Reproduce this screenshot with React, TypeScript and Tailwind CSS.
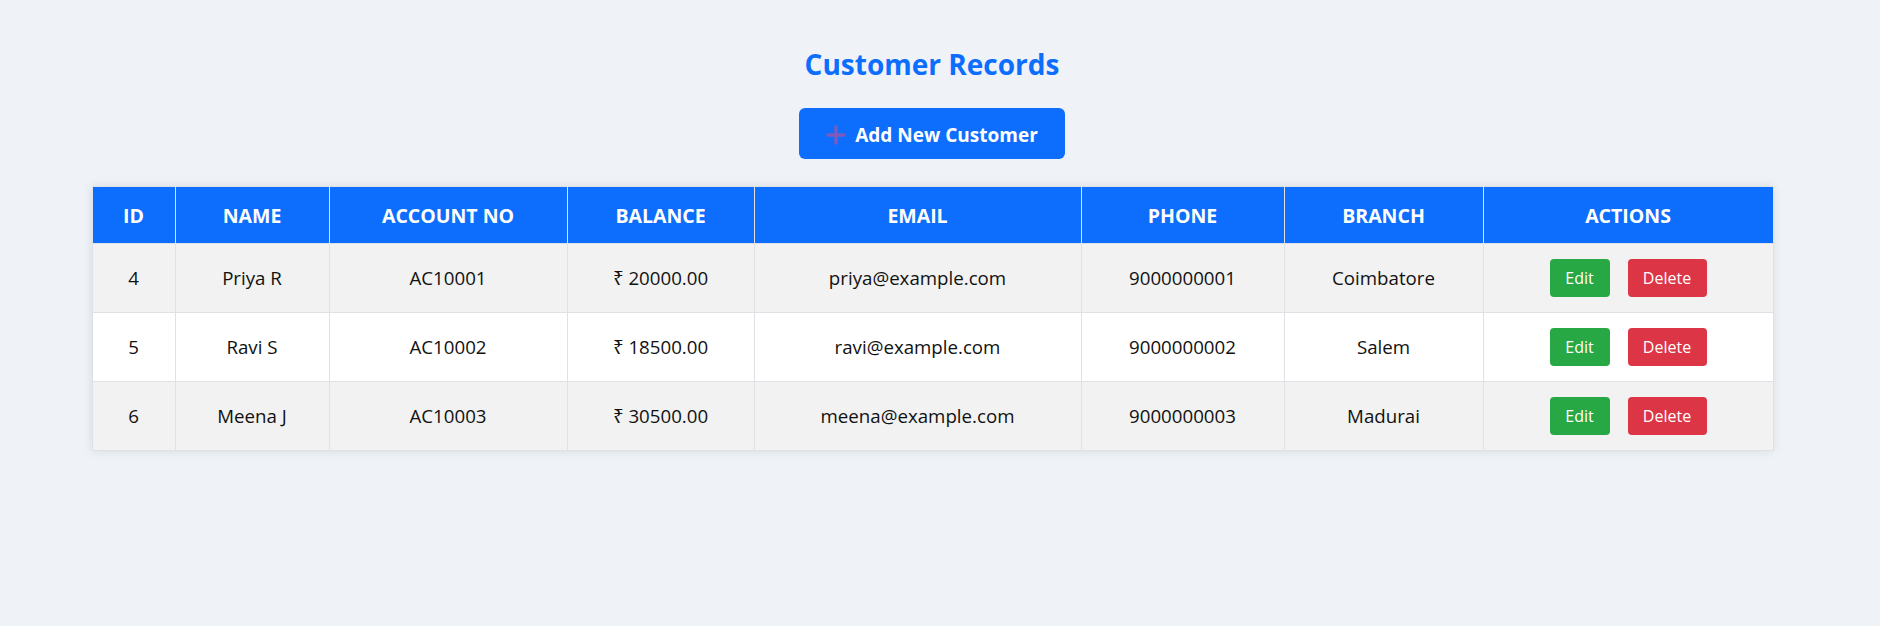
import React from "react";

const rows = [
  { id: 4, name: "Priya R", acc: "AC10001", bal: "₹ 20000.00", email: "priya@example.com", phone: "9000000001", branch: "Coimbatore" },
  { id: 5, name: "Ravi S", acc: "AC10002", bal: "₹ 18500.00", email: "ravi@example.com", phone: "9000000002", branch: "Salem" },
  { id: 6, name: "Meena J", acc: "AC10003", bal: "₹ 30500.00", email: "meena@example.com", phone: "9000000003", branch: "Madurai" },
];

const headers = ["ID", "NAME", "ACCOUNT NO", "BALANCE", "EMAIL", "PHONE", "BRANCH", "ACTIONS"];
const widths = ["w-[83px]", "w-[154px]", "w-[238px]", "w-[187px]", "w-[327px]", "w-[203px]", "w-[199px]", "w-[290px]"];

export default function App() {
  return (
    <div
      className="min-h-[626px] w-full bg-[#eff2f7] text-[#111]"
      style={{ fontFamily: '"Open Sans", "Noto Sans", sans-serif' }}
    >
      <div className="w-[1864px] flex flex-col items-center pt-[47px]">
        <h2 className="text-[28px] leading-[34px] font-bold text-[#0d6efd]">Customer Records</h2>
        <button className="mt-[27px] w-[266px] h-[51px] pt-[4px] rounded-[6px] bg-[#0d6efd] text-white text-[19px] font-bold flex items-center justify-center gap-[9px]">
          <svg width="20" height="20" viewBox="0 0 20 20" className="shrink-0 -mt-[2px]">
            <line x1="10" y1="2" x2="10" y2="18" stroke="#7d5bbd" strokeWidth="3.4" strokeLinecap="round" />
            <line x1="2" y1="10" x2="18" y2="10" stroke="#7d5bbd" strokeWidth="3.4" strokeLinecap="round" />
          </svg>
          <span>Add New Customer</span>
        </button>
        <div className="mt-[27px] w-[1681px] shadow-[0_0_10px_rgba(0,0,0,0.1)] bg-white">
          <table className="w-full table-fixed border-collapse">
            <thead>
              <tr className="bg-[#0d6efd] text-white">
                {headers.map((h, i) => (
                  <th
                    key={h}
                    className={`${widths[i]} h-[57px] pt-[2px] border border-[#dee2e6] text-[19.5px] font-bold text-center`}
                  >
                    {h}
                  </th>
                ))}
              </tr>
            </thead>
            <tbody>
              {rows.map((r, idx) => (
                <tr key={r.id} className={idx % 2 === 0 ? "bg-[#f2f2f2]" : "bg-white"}>
                  {[r.id, r.name, r.acc, r.bal, r.email, r.phone, r.branch].map((v, i) => (
                    <td key={i} className="h-[69px] border border-[#dee2e6] text-[18.7px] text-center p-0">
                      {v}
                    </td>
                  ))}
                  <td className="h-[69px] border border-[#dee2e6] p-0">
                    <div className="flex items-center justify-center gap-[18px]">
                      <button className="w-[60px] h-[38px] rounded-[4px] bg-[#28a745] text-white text-[16px]">Edit</button>
                      <button className="w-[79px] h-[38px] rounded-[4px] bg-[#dc3545] text-white text-[16px]">Delete</button>
                    </div>
                  </td>
                </tr>
              ))}
            </tbody>
          </table>
        </div>
      </div>
    </div>
  );
}
